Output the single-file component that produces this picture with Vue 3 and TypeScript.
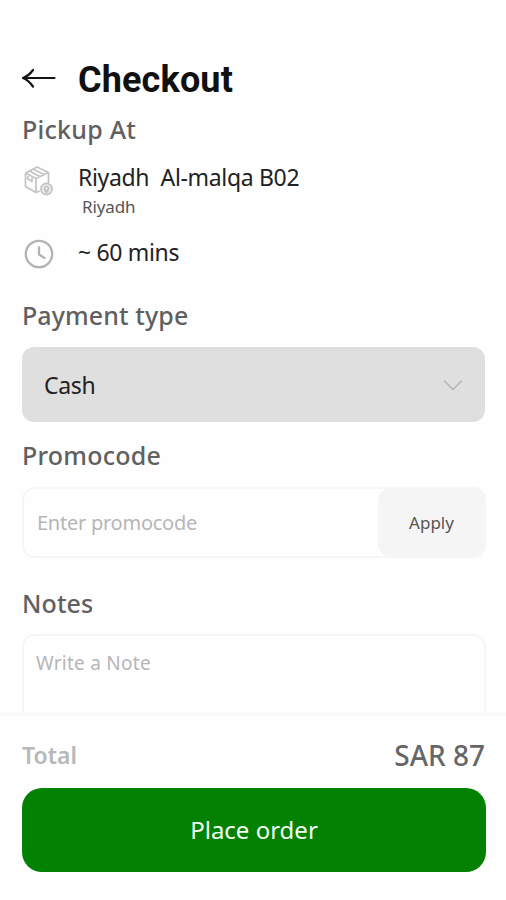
<script setup lang="ts">
import { ref } from 'vue'

const branch = 'Riyadh\u00a0 Al-malqa B02'
const city = 'Riyadh'
const eta = '~ 60 mins'
const payment = ref('Cash')
const promocode = ref('')
const note = ref('')
const total = 87
</script>

<template>
  <div class="screen">
    <main class="content">
      <header class="header">
        <svg class="back" width="36" height="24" viewBox="0 0 36 24" fill="none" stroke="#151515" stroke-width="2.2" stroke-linecap="round" stroke-linejoin="round">
          <path d="M32.500 12H1M11 4C8.500 7.500 5 10.500 1 12C5 13.500 8.500 17 11 20.500" />
        </svg>
        <h1>Checkout</h1>
      </header>

      <section class="pickup">
        <h2>Pickup At</h2>
        <div class="row place">
          <svg class="box" width="32" height="34" viewBox="0 0 32 34" fill="none" stroke="#c4c4c4" stroke-width="1.7" stroke-linejoin="round">
            <path d="M3.500 9L15 3L26.500 8.500V19M3.500 9V22.500L14 28.500L18 27M3.500 9L14 14.500L26.500 8.500M14 14.500V28.500M7.500 7L18 12.500M11 5L22 10.500M6 12V15L10 17.500V14" />
            <circle cx="24.500" cy="25" r="5.600" fill="#ededed" />
            <circle cx="24.500" cy="24.500" r="2" />
            <path d="M23 26.500L24.500 28.500L26 26.500" />
          </svg>
          <div class="address">
            <div class="name">{{ branch }}</div>
            <div class="city">{{ city }}</div>
          </div>
        </div>
        <div class="row time">
          <svg width="32" height="32" viewBox="0 0 32 32" fill="none" stroke="#b3b3b3" stroke-width="2.3" stroke-linecap="round" stroke-linejoin="round">
            <circle cx="16" cy="16" r="13.200" />
            <path d="M16 9.500V16.500L21.500 20" />
          </svg>
          <div class="name eta">{{ eta }}</div>
        </div>
      </section>

      <section class="payment">
        <h2 class="tight">Payment type</h2>
        <button class="select" type="button">
          <span>{{ payment }}</span>
          <svg width="20" height="12" viewBox="0 0 20 12" fill="none" stroke="#b5b5b5" stroke-width="1.500" stroke-linecap="round" stroke-linejoin="round">
            <path d="M1.500 2L10 10.500L18.500 2" />
          </svg>
        </button>
      </section>

      <section class="promo">
        <h2>Promocode</h2>
        <div class="field">
          <input v-model="promocode" type="text" placeholder="Enter promocode" />
          <button class="apply" type="button">Apply</button>
        </div>
      </section>

      <section class="notes">
        <h2 class="tight">Notes</h2>
        <textarea v-model="note" placeholder="Write a Note"></textarea>
      </section>
    </main>

    <footer class="footer">
      <div class="summary">
        <span class="label">Total</span>
        <span class="amount">SAR {{ total }}</span>
      </div>
      <button class="order" type="button">Place order</button>
    </footer>
  </div>
</template>

<style>
body {
  margin: 0;
  background: #fefefe;
}
</style>

<style scoped>
.screen {
  display: flex;
  flex-direction: column;
  height: 900px;
  overflow: hidden;
  box-sizing: border-box;
  background: #fefefe;
  font-family: 'Noto Sans', sans-serif;
  color: #222;
}
.screen * {
  box-sizing: border-box;
}
button,
input,
textarea {
  font-family: inherit;
  margin: 0;
  border: 0;
  outline: 0;
}
svg {
  flex: none;
  display: block;
}
.content {
  height: 712px;
  flex: none;
  overflow: hidden;
  padding: 60px 20px 0 22px;
}
.header {
  display: flex;
  align-items: center;
  height: 39px;
}
.back {
  margin: -3px 20px 0 0;
}
h1 {
  margin: 0;
  padding-top: 1px;
  font: 700 36px/39px Roboto, sans-serif;
  letter-spacing: 0.15px;
  color: #101010;
}
h2 {
  margin: 0;
  font-size: 25px;
  line-height: 36px;
  font-weight: 500;
  letter-spacing: 0.25px;
  color: #606060;
  white-space: nowrap;
}
h2.tight {
  letter-spacing: 0.1px;
}
.pickup {
  padding-top: 12px;
}
.row {
  display: flex;
}
.place {
  padding-top: 15px;
  height: 91px;
}
.place .box {
  margin: 2px 24px 0 0;
}
.time {
  height: 32px;
  align-items: center;
}
.time svg {
  margin: 0 23px 0 1px;
}
.name {
  font-size: 23px;
  line-height: 30px;
  letter-spacing: -0.33px;
}
.eta {
  margin-top: -5px;
}
.city {
  padding-left: 4px;
  font-size: 17px;
  line-height: 30px;
  letter-spacing: -0.1px;
  color: #555;
}
.payment {
  padding-top: 27px;
}
.select {
  display: flex;
  align-items: center;
  justify-content: space-between;
  width: 463px;
  height: 75px;
  margin-top: 14px;
  padding: 0 22px;
  border-radius: 12px;
  background: #dfdfdf;
  font-size: 23px;
  letter-spacing: -0.3px;
  color: #222;
}
.promo {
  padding-top: 15px;
}
.field {
  display: flex;
  width: 464px;
  height: 71px;
  margin-top: 14px;
  border: 2px solid #f6f6f6;
  border-radius: 13px;
}
.field input {
  flex: 1;
  min-width: 0;
  padding: 0 13px;
  background: transparent;
  font-size: 20px;
  letter-spacing: -0.25px;
}
.apply {
  width: 107px;
  margin: -1px -1px -1px -2px;
  padding: 0;
  border-radius: 13px;
  background: #f5f5f5;
  font-size: 17px;
  color: #555;
}
::placeholder {
  color: #b6b6b6;
  opacity: 1;
}
.notes {
  padding-top: 27px;
}
textarea {
  display: block;
  width: 464px;
  height: 130px;
  margin-top: 13px;
  padding: 13px 12px;
  border: 2px solid #f6f6f6;
  border-radius: 13px;
  resize: none;
  background: transparent;
  font-size: 19px;
  line-height: 28px;
  letter-spacing: 0.25px;
}
.footer {
  flex: 1;
  padding: 0 21px 0 22px;
  border-top: 4px solid #fafafa;
}
.summary {
  display: flex;
  align-items: center;
  justify-content: space-between;
  height: 72px;
  padding-top: 6px;
}
.label {
  font-size: 23px;
  font-weight: 600;
  color: #b8b8b8;
}
.amount {
  font-size: 28px;
  font-weight: 500;
  color: #666;
}
.order {
  display: block;
  width: 464px;
  height: 84px;
  padding: 0 0 2px;
  border-radius: 20px;
  background: #028102;
  font-size: 24px;
  color: #f4fff4;
}
</style>
